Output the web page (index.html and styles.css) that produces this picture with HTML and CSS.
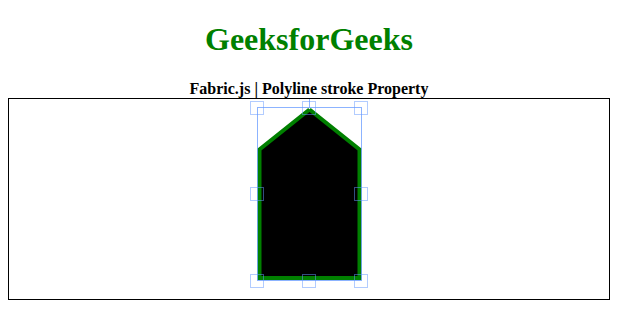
FILE: index.html
```
<!DOCTYPE html>
<html>
<head>
<meta charset="utf-8">
<link rel="stylesheet" href="styles.css">
</head>
<body>
<div class="page">
  <h1 class="brand">GeeksforGeeks</h1>
  <div class="subtitle">Fabric.js | Polyline stroke Property</div>
  <div class="board">
    <svg class="scene" width="600" height="200" viewBox="0 0 600 200">
      <polyline class="shape" points="300.5,10.5 350.5,50.5 350.5,179 250.5,179 250.5,50.5 300.5,10.5"/>
      <rect class="bbox" x="248.5" y="8.5" width="104" height="173"/>
      <line class="bbox" x1="300.5" y1="-40" x2="300.5" y2="8.5"/>
      <rect class="handle" x="241.5" y="2.5" width="13" height="13"/>
      <rect class="handle" x="293.5" y="2.5" width="13" height="13"/>
      <rect class="handle" x="345.5" y="2.5" width="13" height="13"/>
      <rect class="handle" x="241.5" y="88.5" width="13" height="13"/>
      <rect class="handle" x="345.5" y="88.5" width="13" height="13"/>
      <rect class="handle" x="241.5" y="175.5" width="13" height="13"/>
      <rect class="handle" x="293.5" y="175.5" width="13" height="13"/>
      <rect class="handle" x="345.5" y="175.5" width="13" height="13"/>
      <rect class="handle" x="293.5" y="-38.5" width="13" height="13"/>
    </svg>
  </div>
</div>
</body>
</html>
```
FILE: styles.css
```
html, body {
  background: #ffffff;
}
body {
  margin: 8px;
  font-family: "Liberation Serif", "Times New Roman", serif;
  color: #000;
}
.page {
  text-align: center;
}
.brand {
  color: green;
  font-size: 32px;
  font-weight: bold;
  margin: 13.44px 0 21.44px;
}
.subtitle {
  font-size: 16px;
  font-weight: bold;
}
.board {
  width: 600px;
  height: 200px;
  margin: 0 auto;
  border: 1px solid #000;
}
.scene {
  display: block;
}
.shape {
  fill: #000;
  stroke: green;
  stroke-width: 4;
  stroke-linejoin: miter;
  stroke-linecap: butt;
}
.bbox {
  fill: none;
  stroke: rgba(102, 153, 255, 0.75);
  stroke-width: 1;
}
.handle {
  fill: none;
  stroke: rgba(102, 153, 255, 0.5);
  stroke-width: 1;
}
```
